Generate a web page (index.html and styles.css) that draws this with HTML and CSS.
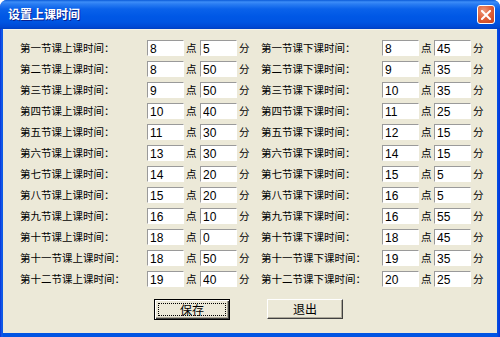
FILE: index.html
```html
<!doctype html>
<html lang="zh-CN">
<head>
    <meta charset="utf-8">
    <title>设置上课时间</title>
    <link rel="stylesheet" href="styles.css">
</head>
<body>
<div class="window">
    <div class="titlebar">
        <span class="title">设置上课时间</span>
        <button class="close" title="关闭">
            <svg width="10" height="10" viewBox="0 0 10 10"><path d="M1 1L9 9M9 1L1 9" stroke="#fff" stroke-width="2" stroke-linecap="square"/></svg>
        </button>
    </div>
    <div class="client">
        <div class="times">
            <label>第一节课上课时间：</label><input class="edit" value="8"><span class="unit">点</span><input class="edit" value="5"><span class="unit">分</span>
            <label>第一节课下课时间：</label><input class="edit" value="8"><span class="unit">点</span><input class="edit" value="45"><span class="unit">分</span>

            <label>第二节课上课时间：</label><input class="edit" value="8"><span class="unit">点</span><input class="edit" value="50"><span class="unit">分</span>
            <label>第二节课下课时间：</label><input class="edit" value="9"><span class="unit">点</span><input class="edit" value="35"><span class="unit">分</span>

            <label>第三节课上课时间：</label><input class="edit" value="9"><span class="unit">点</span><input class="edit" value="50"><span class="unit">分</span>
            <label>第三节课下课时间：</label><input class="edit" value="10"><span class="unit">点</span><input class="edit" value="35"><span class="unit">分</span>

            <label>第四节课上课时间：</label><input class="edit" value="10"><span class="unit">点</span><input class="edit" value="40"><span class="unit">分</span>
            <label>第四节课下课时间：</label><input class="edit" value="11"><span class="unit">点</span><input class="edit" value="25"><span class="unit">分</span>

            <label>第五节课上课时间：</label><input class="edit" value="11"><span class="unit">点</span><input class="edit" value="30"><span class="unit">分</span>
            <label>第五节课下课时间：</label><input class="edit" value="12"><span class="unit">点</span><input class="edit" value="15"><span class="unit">分</span>

            <label>第六节课上课时间：</label><input class="edit" value="13"><span class="unit">点</span><input class="edit" value="30"><span class="unit">分</span>
            <label>第六节课下课时间：</label><input class="edit" value="14"><span class="unit">点</span><input class="edit" value="15"><span class="unit">分</span>

            <label>第七节课上课时间：</label><input class="edit" value="14"><span class="unit">点</span><input class="edit" value="20"><span class="unit">分</span>
            <label>第七节课下课时间：</label><input class="edit" value="15"><span class="unit">点</span><input class="edit" value="5"><span class="unit">分</span>

            <label>第八节课上课时间：</label><input class="edit" value="15"><span class="unit">点</span><input class="edit" value="20"><span class="unit">分</span>
            <label>第八节课下课时间：</label><input class="edit" value="16"><span class="unit">点</span><input class="edit" value="5"><span class="unit">分</span>

            <label>第九节课上课时间：</label><input class="edit" value="16"><span class="unit">点</span><input class="edit" value="10"><span class="unit">分</span>
            <label>第九节课下课时间：</label><input class="edit" value="16"><span class="unit">点</span><input class="edit" value="55"><span class="unit">分</span>

            <label>第十节课上课时间：</label><input class="edit" value="18"><span class="unit">点</span><input class="edit" value="0"><span class="unit">分</span>
            <label>第十节课下课时间：</label><input class="edit" value="18"><span class="unit">点</span><input class="edit" value="45"><span class="unit">分</span>

            <label>第十一节课上课时间：</label><input class="edit" value="18"><span class="unit">点</span><input class="edit" value="50"><span class="unit">分</span>
            <label>第十一节课下课时间：</label><input class="edit" value="19"><span class="unit">点</span><input class="edit" value="35"><span class="unit">分</span>

            <label>第十二节课上课时间：</label><input class="edit" value="19"><span class="unit">点</span><input class="edit" value="40"><span class="unit">分</span>
            <label>第十二节课下课时间：</label><input class="edit" value="20"><span class="unit">点</span><input class="edit" value="25"><span class="unit">分</span>
        </div>
        <div class="buttons">
            <button class="btn btn-default"><span>保存</span></button>
            <button class="btn"><span>退出</span></button>
        </div>
    </div>
</div>
</body>
</html>
```

FILE: styles.css
```css
html, body {
    margin: 0;
    padding: 0;
    background: #fff;
}
.window {
    width: 500px;
    height: 337px;
    display: flex;
    flex-direction: column;
    background: linear-gradient(to right, #0831d9 0, #1660ea 2px, #0054e3 3px, #0054e3 497px, #0831d9 500px);
    border-radius: 7px 7px 0 0;
    overflow: hidden;
}
.titlebar {
    height: 29px;
    flex: none;
    display: flex;
    align-items: center;
    padding: 0 5px 2px 8px;
    box-sizing: border-box;
    background: linear-gradient(#0a5ad8 0, #3d8ef8 2px, #2a7df2 4px, #0a62ea 9px, #0058e6 16px, #0055e2 22px, #0048d4 27px, #003fc0 29px);
}
.title {
    flex: 1;
    color: #fff;
    font: bold 12px "Noto Sans CJK SC", sans-serif;
    text-shadow: 1px 1px 0 #0a1e8c;
}
.close {
    width: 18px;
    height: 19px;
    margin-top: 2px;
    padding: 0;
    border: 1px solid #fff;
    border-radius: 3px;
    background: radial-gradient(circle at 35% 30%, #ee9a7c 0, #e0633c 45%, #c7411c 100%);
    display: flex;
    align-items: center;
    justify-content: center;
}
.client {
    flex: 1;
    margin: 0 3px 4px 3px;
    background: #ece9d8;
    border-top: 1px solid #f5f3ea;
    padding: 7px 0 0 17px;
}
.times {
    display: grid;
    grid-template-columns: 127px 37px 16px 37px 24px 121px 37px 15px 37px auto;
    grid-auto-rows: 21px;
    align-items: center;
    font: 10.5px "Noto Sans CJK SC", sans-serif;
    color: #000;
}
.times label {
    white-space: nowrap;
}
.unit {
    padding-left: 2px;
}
.edit {
    width: 37px;
    height: 16px;
    box-sizing: border-box;
    margin: 0;
    padding: 2px 0 0 2px;
    border: 1px solid #fff;
    border-top-color: #9a9a9a;
    border-left-color: #9a9a9a;
    background: #fff;
    font: 12px "Liberation Sans", sans-serif;
    color: #000;
    outline: none;
}
.buttons {
    display: flex;
    gap: 37px;
    padding: 10px 0 0 134px;
}
.btn {
    width: 76px;
    height: 20px;
    margin: 0;
    padding: 0;
    background: #ece9d8;
    border: 1px solid;
    border-color: #fff #404040 #404040 #fff;
    box-shadow: inset -1px -1px 0 #aca899;
    font: 12px "Noto Sans CJK SC", sans-serif;
    color: #000;
}
.btn span {
    display: block;
    line-height: 16px;
}
.btn-default {
    height: 21px;
    border: 1px solid #000;
    box-shadow: inset 1px 1px 0 #fff, inset -1px -1px 0 #404040, inset -2px -2px 0 #aca899;
    padding: 3px;
}
.btn-default span {
    line-height: 11px;
    border: 1px dotted #000;
}
```
